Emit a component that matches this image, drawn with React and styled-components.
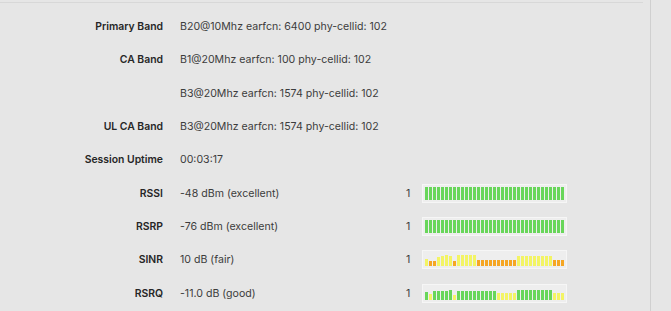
import React from "react";
import styled, { createGlobalStyle } from "styled-components";

const Global = createGlobalStyle`
  html, body { margin: 0; padding: 0; background: #e6e6e6; }
  body { font-family: Inter, "Noto Sans", sans-serif; overflow: hidden; }
`;

const Page = styled.div`
  display: flex;
  width: 671px;
  height: 311px;
`;

const Panel = styled.div`
  width: 643px;
  margin-top: 2px;
  border-top: 1px solid #d8d8d8;
  padding-top: 7px;
  box-sizing: border-box;
`;

const Gutter = styled.div`
  width: 7px;
`;

const Side = styled.div`
  flex: 1;
  border-left: 1px solid #d0d0d0;
`;

const Row = styled.div`
  display: grid;
  grid-template-columns: 163px 226px 14px 146px;
  column-gap: 17px;
  align-items: center;
  height: 33.3px;
`;

const RowBars = styled(Row)`
  column-gap: 0;
  grid-template-columns: 180px 226px 16px 146px;
`;

const Label = styled.div`
  text-align: right;
  font-size: 10.4px;
  font-weight: 600;
  color: #262626;
  white-space: nowrap;
  padding-right: ${(p) => (p.$pad ? "17px" : "0")};
`;

const Value = styled.div`
  font-size: 10.6px;
  color: #3c3c3c;
  white-space: nowrap;
`;

const Count = styled.div`
  font-size: 10.6px;
  color: #3c3c3c;
`;

const Meter = styled.div`
  width: 145px;
  height: 19px;
  box-sizing: border-box;
  border: 1px solid #f6f6f6;
  background: #eeeeee;
  padding: 2px 1px 2px 2px;
  display: flex;
  align-items: flex-end;
  gap: 1px;
`;

const Bar = styled.div`
  width: 3px;
  flex: none;
  height: ${(p) => p.$h}px;
  background: ${(p) => p.$c};
`;

const G = "#68d65a";
const Y = "#f3f464";
const O = "#f5a623";

const rep = (n, c, h) => Array.from({ length: n }, () => [c, h]);

const full = rep(35, G, 13);

const sinr = [
  [Y, 7],
  [O, 5],
  [O, 5],
  [Y, 9],
  [Y, 10],
  [Y, 11],
  [Y, 10],
  [O, 5],
  ...rep(5, Y, 11),
  ...rep(10, O, 6),
  ...rep(9, Y, 10),
  ...rep(3, O, 6),
];

const rsrq = [
  [G, 8],
  [Y, 6],
  [G, 9],
  [G, 9],
  [G, 9],
  [G, 9],
  [G, 10],
  [Y, 5],
  ...rep(10, G, 9),
  ...rep(5, Y, 7),
  ...rep(9, G, 10),
  ...rep(3, Y, 7),
];

const info = [
  ["Primary Band", "B20@10Mhz earfcn: 6400 phy-cellid: 102"],
  ["CA Band", "B1@20Mhz earfcn: 100 phy-cellid: 102"],
  ["", "B3@20Mhz earfcn: 1574 phy-cellid: 102"],
  ["UL CA Band", "B3@20Mhz earfcn: 1574 phy-cellid: 102"],
  ["Session Uptime", "00:03:17"],
];

const signals = [
  ["RSSI", "-48 dBm (excellent)", full],
  ["RSRP", "-76 dBm (excellent)", full],
  ["SINR", "10 dB (fair)", sinr],
  ["RSRQ", "-11.0 dB (good)", rsrq],
];

export default function App() {
  return (
    <>
      <Global />
      <Page>
        <Panel>
          {info.map(([l, v], i) => (
            <Row key={i}>
              <Label>{l}</Label>
              <Value>{v}</Value>
            </Row>
          ))}
          {signals.map(([l, v, bars]) => (
            <RowBars key={l}>
              <Label $pad>{l}</Label>
              <Value>{v}</Value>
              <Count>1</Count>
              <Meter>
                {bars.map(([c, h], i) => (
                  <Bar key={i} $c={c} $h={h} />
                ))}
              </Meter>
            </RowBars>
          ))}
        </Panel>
        <Gutter />
        <Side />
      </Page>
    </>
  );
}
